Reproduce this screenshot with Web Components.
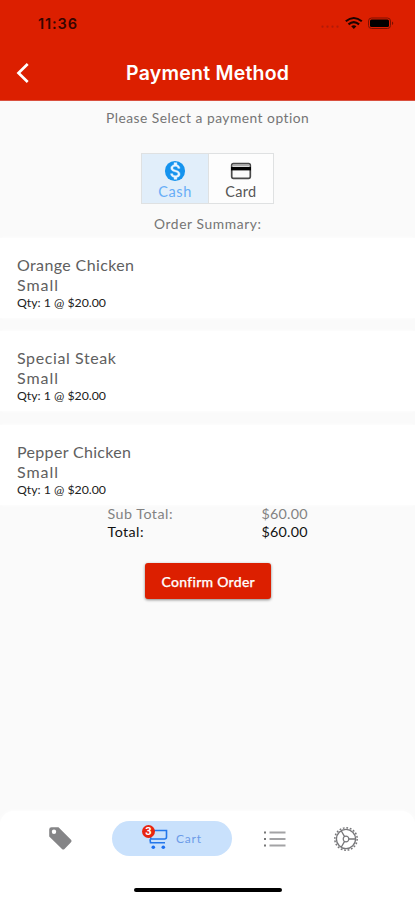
<!DOCTYPE html>
<html lang="en">
<head>
<meta charset="utf-8">
<title>Payment Method</title>
<style>
html,body{margin:0;height:100%;background:#fafafa}
body{font-family:Lato,"Open Sans",sans-serif}
</style>
</head>
<body>
<payment-app></payment-app>
<script>
const define=(name,html,setup)=>{
  const t=document.createElement('template');t.innerHTML=html;
  customElements.define(name,class extends HTMLElement{
    constructor(){super();this.attachShadow({mode:'open'}).append(t.content.cloneNode(true));}
    connectedCallback(){if(setup)setup(this);}
  });
};

// A single line of text, tracked so that it spans the width given in "w".
define('fit-text',`<style>:host{display:inline-block;white-space:nowrap}span{display:inline-block}</style><span><slot></slot></span>`,el=>{
  const s=el.shadowRoot.querySelector('span'),w=+el.getAttribute('w');
  const n=s.firstChild.assignedNodes({flatten:true}).map(x=>x.textContent).join('').length;
  el.style.width=w+'px';
  s.style.letterSpacing=(w-s.getBoundingClientRect().width)/Math.max(1,n-1)+'px';
});

define('status-bar',`<style>
:host{display:flex;height:46px;align-items:center;justify-content:space-between;padding:0 20px 0 38px;box-sizing:border-box;color:#370500;font:600 14.5px Inter,sans-serif}
.r{display:flex;align-items:center}svg{display:block}
</style><fit-text w="39">11:36</fit-text><div class="r">
<svg width="76" height="20" viewBox="0 0 76 20">
<g fill="#b01b08"><circle cx="3.5" cy="13.7" r="1.1"/><circle cx="8.5" cy="13.7" r="1.1"/><circle cx="13.5" cy="13.7" r="1.1"/><circle cx="18.500" cy="13.7" r="1.1"/></g>
<g fill="none" stroke="#1d0300" stroke-width="2.1"><path d="M26.8 8.3Q34.8 1.7 42.8 8.3M29.5 11.4Q34.8 6.9 40.1 11.4"/></g><path fill="#1d0300" d="M32.2 13.3Q34.8 11.2 37.4 13.3L34.8 16z"/>
<rect x="49.500" y="5" width="22" height="10.500" rx="3" fill="none" stroke="#7c1000"/><rect x="51" y="6.500" width="19" height="7.500" rx="1.500" fill="#000"/><path d="M73 8.500q2.500 1.700 0 3.600z" fill="#7c1000"/>
</svg></div>`);

define('app-header',`<style>
:host{display:block;height:100px;background:#dc1f00;border-bottom:1px solid #d9503f}
nav{display:grid;grid-template-columns:126px 163px 1fr;height:54px;align-items:center;color:#fff;font:600 19.500px/26px Inter,sans-serif}
svg{display:block;margin-left:16px}
</style><status-bar></status-bar><nav><svg width="14" height="20" viewBox="0 0 14 20"><path d="M11.700 1L2.500 10l9.200 9" fill="none" stroke="#fff" stroke-width="2.700"/></svg><fit-text w="163"><slot></slot></fit-text></nav>`);

define('pay-option',`<style>
:host{display:flex;flex-direction:column;align-items:center;width:66px;box-sizing:border-box;padding-top:6px;background:#fdfdfd;color:#555;font-size:14.500px;line-height:20px}
:host([selected]){background:#e1eefa;color:#67adf7}
</style><slot name="icon"></slot><slot></slot>`);

define('pay-toggle',`<style>
:host{display:flex;width:131px;height:49px;border:1px solid #dfe1e2;margin:25px auto 0}
pay-option+pay-option{border-left:1px solid #dfe1e2}svg{display:block}
</style><pay-option selected><svg slot="icon" width="22" height="22" viewBox="0 0 24 24"><circle cx="12" cy="12" r="11" fill="#1593ee"/><path transform="translate(12 12) scale(1.150) translate(-12.100 -12.100)" fill="#e9f4fe" stroke="#e9f4fe" stroke-width=".4" d="M13.9 18.1V20h-2.7v-1.9c-1.7-.4-3.2-1.5-3.3-3.4h2c.1 1 .8 1.9 2.6 1.9 2 0 2.4-1 2.4-1.6 0-.8-.4-1.6-2.7-2.1-2.4-.6-4.1-1.6-4.1-3.6 0-1.7 1.4-2.8 3.1-3.2V4.200h2.700v2c1.900.500 2.800 1.900 2.900 3.400h-2c-.1-1.100-.7-1.900-2.300-1.900-1.500 0-2.400.7-2.400 1.700 0 .8.700 1.400 2.700 1.900s4.100 1.400 4.100 3.800c0 1.800-1.300 2.700-3 3z"/></svg><fit-text w="33">Cash</fit-text></pay-option>
<pay-option><svg slot="icon" width="22" height="22" viewBox="0 0 22 22"><rect x="1.700" y="3.700" width="18.600" height="14.600" rx="1.700" fill="#fafafa" stroke="#4a4a4a" stroke-width="1.700"/><path d="M2.500 5.500h17" stroke="#aaa" stroke-width="1.800"/><path d="M1 8.700h20" stroke="#000" stroke-width="3.400"/></svg><fit-text w="31">Card</fit-text></pay-option>`);

define('order-item',`<style>
:host{display:block;box-sizing:border-box;height:80px;background:#fff;padding:17px 17px 0;color:#606060;font-size:16px;line-height:20px;box-shadow:0 0 3px #fff}
div{height:20px}.q{font-size:12.300px;line-height:16px;color:#222}
</style><div><slot name="name"></slot></div><div><slot name="size"></slot></div><div class="q"><slot></slot></div>`);

define('order-totals',`<style>
:host{display:grid;grid-template-columns:154px 46px;margin-left:107.500px;font-size:14.300px;line-height:18px;color:#828282}
.t{color:#111}
</style><fit-text w="65">Sub Total:</fit-text><fit-text w="46">$60.00</fit-text><fit-text class="t" w="36">Total:</fit-text><fit-text class="t" w="46">$60.00</fit-text>`);

define('confirm-button',`<style>
:host{display:block;margin:22px 0 0 145px;width:126px}
button{all:unset;display:flex;width:126px;height:36px;align-items:center;justify-content:center;border-radius:3px;background:#dc1f00;color:#fff;font:500 14px Lato,sans-serif;box-shadow:0 1px 3px #0007;-webkit-text-stroke:.25px #fff}
</style><button><fit-text w="93"><slot></slot></fit-text></button>`);

define('cart-tab',`<style>
:host{display:flex;align-items:center;width:120px;height:35px;border-radius:18px;background:#c9e1fc;color:#6c9be8;font-size:12px}
.i{position:relative;margin:0 8px 0 33px}svg{display:block}
b{position:absolute;left:-3px;top:-2px;width:13px;height:13px;border-radius:7px;background:#e82510;color:#fff;font:700 11px/13px Roboto,sans-serif;text-align:center}
</style><div class="i"><svg width="23" height="23" viewBox="0 0 23 23"><g fill="none" stroke="#2477ea" stroke-width="1.600"><path d="M1 3.500h20.500v6.500q0 2-2 2H6L3.500 4M5 12.200l.5 3.500H20"/></g><g fill="#1c6ff0"><circle cx="8.300" cy="20.300" r="1.800"/><circle cx="18.300" cy="20.300" r="1.800"/></g></svg><b>3</b></div><slot></slot>`);

define('bottom-nav',`<style>
:host{display:flex;flex-direction:column;height:89px;margin-top:auto;background:#fff;border-radius:14px 14px 0 0;box-shadow:0 0 4px #fff}
nav{display:grid;grid-template-columns:112px 120px 85px 98px;height:55px;align-items:center}
svg{display:block}.h{width:148px;height:4px;border-radius:2px;background:#000;margin:22px 0 0 134px}
</style><nav><svg style="margin-left:48px" width="25" height="25" viewBox="0 0 25 25"><path fill="#858587" fill-rule="evenodd" d="M1.200 3.500Q1.200 1.200 3.500 1.200L10.500 1.200 23 13.800Q24.300 15 23 16.200L16.500 23Q15.200 24.200 14 23L1.200 10.500zM6 3.500a2.200 2.200 0 1 0 0 4.400 2.200 2.200 0 0 0 0-4.400z"/></svg>
<cart-tab><fit-text w="25">Cart</fit-text></cart-tab>
<svg style="margin-left:30px" width="24" height="20" viewBox="0 0 24 20"><path d="M7.500 3.500h16M7.500 10h16M7.500 16.500h16" stroke="#a3a3a5" stroke-width="1.900"/><path d="M2 3.500H4M2 10H4M2 16.500H4" stroke="#777" stroke-width="2.200"/></svg>
<svg style="margin-left:16px" width="26" height="26" viewBox="-13 -13 26 26" fill="none" stroke="#77777a"><circle r="11.200" stroke-width="1.500" stroke-dasharray="1.800 1.719"/><circle r="9.600" stroke-width="1.400"/><circle r="2.800" stroke-width="1.200"/><path d="M2.800 0H9.600M-1.400-2.400L-4.800-8.300M-1.400 2.400L-4.800 8.300" stroke-width="1.300"/></svg></nav><div class="h"></div>`);

define('payment-app',`<style>
:host{display:flex;flex-direction:column;width:415px;height:900px;overflow:hidden;background:#fafafa;color:#757575;font-size:13.800px;line-height:20px}
.c{display:flex;justify-content:center}.p{margin-top:7px}.s{margin-top:10px;margin-bottom:4px}
.list{display:flex;flex-direction:column;gap:13.400px;height:267px}
</style><app-header>Payment Method</app-header>
<div class="c p"><fit-text w="203">Please Select a payment option</fit-text></div>
<pay-toggle></pay-toggle>
<div class="c s"><fit-text w="107">Order Summary:</fit-text></div>
<div class="list">
<order-item><fit-text slot="name" w="117">Orange Chicken</fit-text><fit-text slot="size" w="41">Small</fit-text><fit-text w="89">Qty: 1 @ $20.00</fit-text></order-item>
<order-item><fit-text slot="name" w="99">Special Steak</fit-text><fit-text slot="size" w="41">Small</fit-text><fit-text w="89">Qty: 1 @ $20.00</fit-text></order-item>
<order-item><fit-text slot="name" w="114">Pepper Chicken</fit-text><fit-text slot="size" w="41">Small</fit-text><fit-text w="89">Qty: 1 @ $20.00</fit-text></order-item>
</div>
<order-totals></order-totals>
<confirm-button>Confirm Order</confirm-button>
<bottom-nav></bottom-nav>`);
</script>
</body>
</html>
